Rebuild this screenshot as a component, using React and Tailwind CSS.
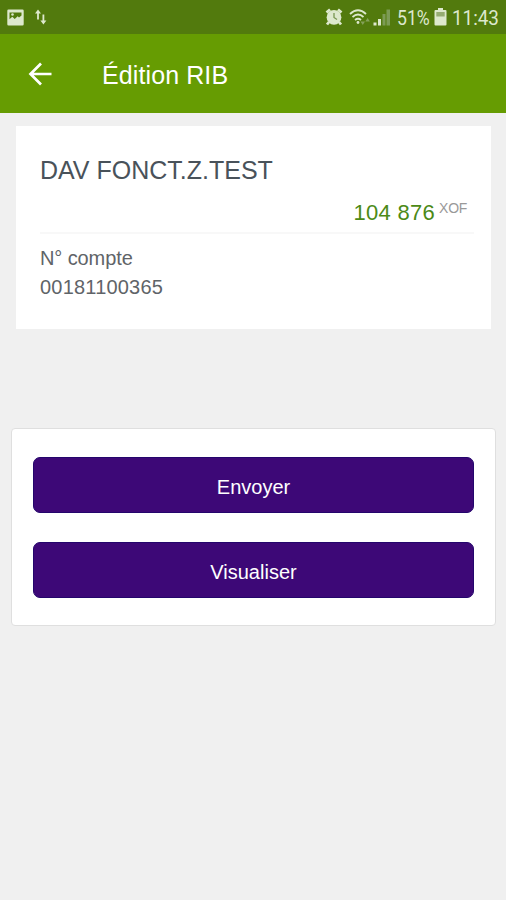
const actions = ["Envoyer", "Visualiser"];

function StatusBar() {
  return (
    <div className="flex h-[34px] items-center justify-between bg-[#527a0d] pl-[7px] text-[#dde8cd]">
      <div className="flex items-center gap-[11px]">
        <svg width="17" height="17" viewBox="0 0 17 17">
          <path
            fill="currentColor"
            fillRule="evenodd"
            d="M1.5 0.5h14a1.2 1.2 0 0 1 1.2 1.2v13.6a1.2 1.2 0 0 1-1.2 1.2h-14a1.2 1.2 0 0 1-1.2-1.2V1.7a1.2 1.2 0 0 1 1.2-1.2zM2.5 3.5v6.700l2.800-2.500 2.400 2.300 3-2.800 1.300 1.300 2.500-2V3.500z"
          />
          <circle cx="5.500" cy="5.500" r="1.300" fill="currentColor" />
        </svg>
        <svg width="12" height="16" viewBox="0 0 12 16" fill="currentColor">
          <path d="M3 0.500L6 4.500H3.900V10.500H2.100V4.500H0z" />
          <path d="M8.400 15.500L5.400 11.500H7.500V5.500H9.300V11.500H11.400z" />
        </svg>
      </div>
      <div className="flex items-center">
        <svg width="18" height="18" viewBox="0 0 18 18" fill="currentColor">
          <circle cx="9" cy="9.300" r="7.400" />
          <path d="M1.500 4.500L5 1.500M16.500 4.500L13 1.500M4 14L2 16.500M14 14L16 16.500" stroke="currentColor" strokeWidth="2.800" />
          <path d="M9 5v4.500l3 2" fill="none" stroke="#789650" strokeWidth="1.300" />
        </svg>
        <svg width="22" height="18" viewBox="0 0 22 18" className="ml-[6px]" fill="none" stroke="currentColor">
          <path d="M1 6Q9-1.500 17 6" strokeWidth="1.800" />
          <path d="M3.500 9Q9 4 14.500 9" strokeWidth="1.800" />
          <path d="M6 12Q9 9.500 12 12" strokeWidth="1.800" />
          <circle cx="9" cy="14.500" r="1.400" fill="currentColor" stroke="none" />
          <path d="M11.500 13.500h4.500l-2.250 3.500zM16.300 13.500l2.300-3.500 2.300 3.500z" fill="#84a05a" stroke="none" />
        </svg>
        <svg width="18" height="18" viewBox="0 0 18 18" className="ml-[2px]">
          <path d="M0.500 14.500h3v3h-3zM5 11h3v6.500H5z" fill="currentColor" />
          <path d="M9.500 6h3v11.500h-3zM13.500 1.500h3.500v16h-3.500z" fill="#7c9b55" />
        </svg>
        <span className="ml-[6px] block w-[34px] origin-left scale-x-[0.860] whitespace-nowrap pt-px font-[Roboto,sans-serif] text-[20.500px] leading-[34px]">
          51%
        </span>
        <svg width="13" height="18" viewBox="0 0 13 18" className="ml-[3px]">
          <path d="M4 0h5v2h2.500a1 1 0 0 1 1 1v13.500a1 1 0 0 1-1 1h-10a1 1 0 0 1-1-1V3a1 1 0 0 1 1-1H4z" fill="currentColor" />
          <path d="M2.300 4h8.400v4.500H2.300z" fill="#95ac72" />
        </svg>
        <span className="ml-[5px] block w-[54px] origin-left scale-x-[0.920] whitespace-nowrap pt-px font-[Roboto,sans-serif] text-[20.500px] leading-[34px]">
          11:43
        </span>
      </div>
    </div>
  );
}

function AppBar() {
  return (
    <header className="flex h-[79px] items-center bg-[#669c02] pl-[28px] text-white">
      <button type="button" aria-label="Retour">
        <svg width="24" height="24" viewBox="0 0 24 24" fill="none" stroke="currentColor" strokeWidth="2.700">
          <path d="M13 1.500L2.500 12 13 22.500M2.500 12H23.500" />
        </svg>
      </button>
      <h1 className="ml-[50px] pt-[4px] text-[25px] tracking-[0.100px]">Édition RIB</h1>
    </header>
  );
}

function AccountCard() {
  return (
    <section className="mx-[16px] mt-[13px] mr-[15px] h-[203px] bg-white pt-[26px] pr-[17px] pl-[24px]">
      <h2 className="text-[25px] leading-[36px] text-[#49525a]">DAV FONCT.Z.TEST</h2>
      <div className="flex h-[46px] justify-end border-b-2 border-[#f8f8f8] pt-[11px] pr-[7px] leading-[28px]">
        <span className="text-[22px] tracking-[0.300px] text-[#4c8a16]">104 876</span>
        <span className="ml-[4px] text-[14px] leading-[19px] tracking-[-0.300px] text-[#999]">XOF</span>
      </div>
      <div className="mt-[10px] text-[20px] leading-[29px] text-[#5f6468]">
        <p className="tracking-[-0.100px]">N° compte</p>
        <p className="tracking-[0.200px]">00181100365</p>
      </div>
    </section>
  );
}

export default function App() {
  return (
    <div className="min-h-screen w-full bg-[#f0f0f0] font-['Liberation_Sans',Arial,sans-serif]">
      <StatusBar />
      <AppBar />
      <AccountCard />
      <section className="mx-[11px] mt-[99px] mr-[10px] flex h-[198px] flex-col gap-[29px] rounded-[4px] border border-[#dfdfdf] bg-white px-[21px] pt-[28px]">
        {actions.map((label) => (
          <button
            key={label}
            type="button"
            className="h-[56px] w-full shrink-0 rounded-[7px] border border-[#24066c] bg-[#3d0877] pt-[3px] text-[20px] text-white"
          >
            {label}
          </button>
        ))}
      </section>
    </div>
  );
}
